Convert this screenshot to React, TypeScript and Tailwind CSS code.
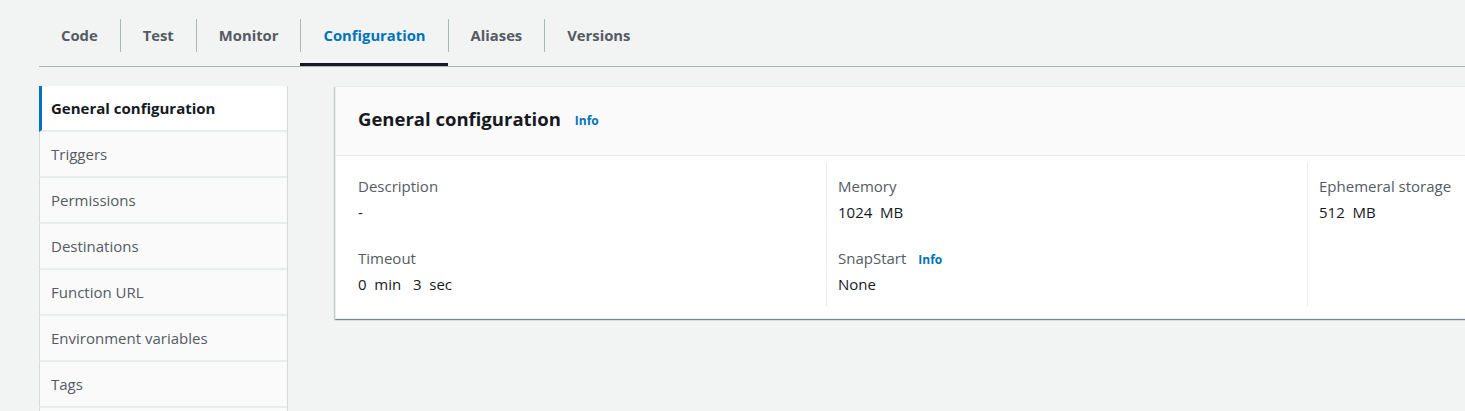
import React from 'react';

const tabs = ['Code', 'Test', 'Monitor', 'Configuration', 'Aliases', 'Versions'];
const menu = [
  'General configuration',
  'Triggers',
  'Permissions',
  'Destinations',
  'Function URL',
  'Environment variables',
  'Tags',
  '',
];

function Field({ label, value, info }: { label: string; value: string; info?: boolean }) {
  return (
    <div className="flex flex-col gap-[4px]">
      <div className="flex h-[22px] items-baseline overflow-hidden text-[15px] leading-[22px] text-[#545b64]">
        {label}
        {info && <span className="ml-[12px] text-[12px] font-bold leading-[22px] text-[#0073bb]">Info</span>}
      </div>
      <div className="whitespace-pre text-[15px] leading-[22px] text-[#16191f]">{value}</div>
    </div>
  );
}

export default function App() {
  return (
    <main
      className="h-[411px] w-[1465px] overflow-hidden bg-[#f2f3f3]"
      style={{ fontFamily: '"Open Sans", "Noto Sans", Arial, sans-serif' }}
    >
      <nav className="ml-[39px] flex border-b border-[#aab7b8] pt-[4px]">
        {tabs.map((t, i) => {
          const active = t === 'Configuration';
          return (
            <div
              key={t}
              className={`flex h-[62px] items-center ${active ? 'border-b-[3px] border-[#16191f] pt-[3px]' : ''}`}
            >
              <div
                className={`flex h-[33px] items-center px-[22px] pt-[1px] text-[14.8px] font-bold ${
                  i > 0 ? 'border-l border-[#aab7b8]' : ''
                } ${active ? 'text-[#0073bb]' : 'text-[#545b64]'}`}
              >
                {t}
              </div>
            </div>
          );
        })}
      </nav>

      <div className="flex items-start gap-[47px] pl-[39px] pt-[19px]">
        <aside className="flex w-[249px] shrink-0 flex-col border-r border-[#d5dbdb] bg-[#eaeded]">
          {menu.map((m, i) => {
            const active = i === 0;
            return (
              <div
                key={i}
                className={`flex h-[46px] items-center border-b-2 border-[#eaeded] text-[15px] ${
                  active
                    ? 'border-l-[3px] border-l-[#0073bb] bg-white pl-[9px] font-bold text-[#16191f]'
                    : 'border-l border-l-[#d5dbdb] bg-[#fafafa] pl-[11px] text-[#545b64]'
                }`}
              >
                {m}
              </div>
            );
          })}
        </aside>

        <section className="w-[1480px] shrink-0 border border-[#eaeded] bg-white shadow-[0_1px_1px_0_rgba(0,28,36,0.3),1px_1px_1px_0_rgba(0,28,36,0.15),-1px_1px_1px_0_rgba(0,28,36,0.15)]">
          <header className="flex h-[69px] items-center border-b border-[#eaeded] bg-[#fafafa] px-[22px] pb-[4px]">
            <h2 className="text-[18.5px] font-bold text-[#16191f]">General configuration</h2>
            <span className="ml-[14px] mt-[3px] text-[12px] font-bold text-[#0073bb]">Info</span>
          </header>
          <div className="grid grid-cols-[468px_481px_481px] px-[22px] pb-[12px] pt-[7px]">
            <div className="flex flex-col gap-[24px] pb-[11px] pt-[12px]">
              <Field label="Description" value="-" />
              <Field label="Timeout" value={'0  min   3  sec'} />
            </div>
            <div className="flex flex-col gap-[24px] border-l border-[#eaeded] pb-[11px] pl-[11px] pt-[12px]">
              <Field label="Memory" value={'1024  MB'} />
              <Field label="SnapStart" value="None" info />
            </div>
            <div className="flex flex-col gap-[24px] border-l border-[#eaeded] pb-[11px] pl-[11px] pt-[12px]">
              <Field label="Ephemeral storage" value={'512  MB'} />
            </div>
          </div>
        </section>
      </div>
    </main>
  );
}
